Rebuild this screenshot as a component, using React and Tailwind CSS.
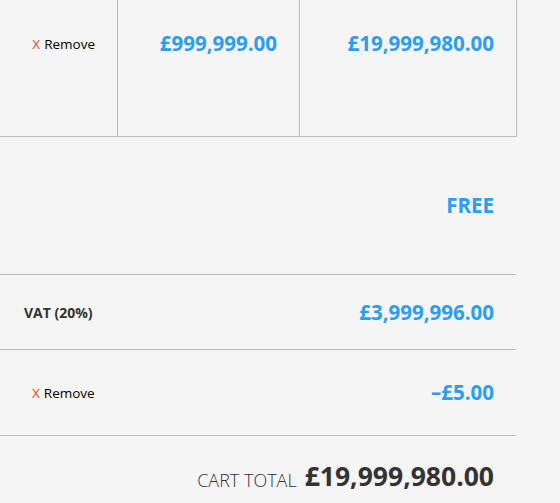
export default function App() {
  const blue = 'text-[#2a9df4]';
  return (
    <div className="w-[560px] h-[503px] overflow-hidden bg-[#f5f5f5] text-[#333] font-['Open_Sans',sans-serif]">
      <div className="w-[517px]">
        {/* Item row */}
        <div className="flex h-[137px] border-b border-[#bbb]">
          <div className="w-[117px] flex items-start justify-end pr-[22px] pt-[34px] text-[13.5px] text-black">
            <span className="text-[#f44336] mr-1">X</span>Remove
          </div>
          <div className={`w-[182px] border-l border-[#bbb] flex justify-end pr-[22px] pt-[28px] text-[20.5px] font-bold ${blue}`}>
            £999,999.00
          </div>
          <div className={`flex-1 border-l border-r border-[#bbb] flex justify-end pr-[22px] pt-[28px] text-[20.5px] font-bold ${blue}`}>
            £19,999,980.00
          </div>
        </div>

        {/* Shipping */}
        <div className="h-[138px] border-b border-[#bbb] flex items-center justify-end pr-[22px] w-[516px]">
          <span className={`text-[20.5px] font-bold ${blue}`}>FREE</span>
        </div>

        {/* VAT */}
        <div className="h-[75px] border-b border-[#bbb] flex items-center justify-between pl-[24px] pr-[22px] w-[516px]">
          <span className="text-[14px] font-bold">VAT (20%)</span>
          <span className={`text-[20.5px] font-bold ${blue}`}>£3,999,996.00</span>
        </div>

        {/* Coupon */}
        <div className="h-[86px] border-b border-[#bbb] flex items-center justify-between pl-[32px] pr-[22px] w-[516px]">
          <span className="text-[13.5px] text-black pt-[2px]"><span className="text-[#f44336] mr-1">X</span>Remove</span>
          <span className={`text-[20.5px] font-bold ${blue}`}>–£5.00</span>
        </div>

        {/* Total */}
        <div className="h-[68px] flex items-end justify-end pr-[22px] pb-[7px] w-[516px]">
          <span className="text-[18px] font-light mr-2 mb-[3px]">CART TOTAL</span>
          <span className="text-[26.5px] font-bold">£19,999,980.00</span>
        </div>
      </div>
    </div>
  );
}
